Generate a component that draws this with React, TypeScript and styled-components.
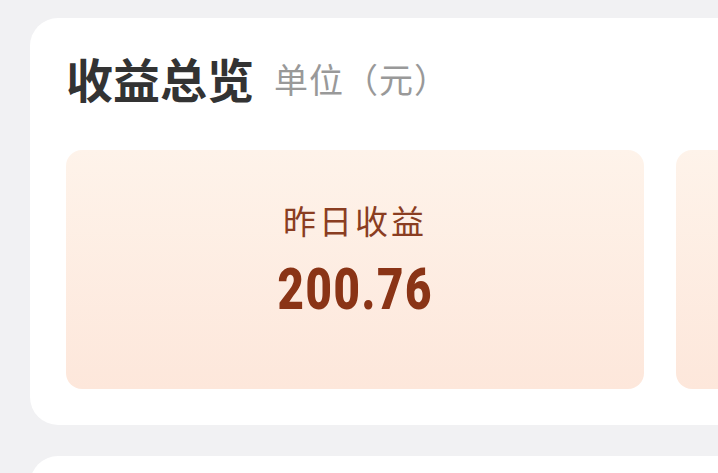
import React from "react";
import styled, { createGlobalStyle } from "styled-components";

const Global = createGlobalStyle`
  html, body {
    margin: 0;
    padding: 0;
    background: #f1f1f3;
    overflow: hidden;
  }
  body {
    font-family: "Noto Sans CJK SC", "Noto Sans", sans-serif;
  }
`;

const Page = styled.div`
  width: 1400px;
  padding: 18px 0 0 30px;
  display: flex;
  flex-direction: column;
  gap: 31px;
`;

const Panel = styled.section<{ $minHeight?: number }>`
  background: #ffffff;
  border-radius: 28px;
  padding: 32px 36px 36px;
  width: 1260px;
  box-sizing: border-box;
  min-height: ${(p) => (p.$minHeight ? `${p.$minHeight}px` : "auto")};
`;

const Header = styled.div`
  display: flex;
  align-items: center;
  height: 56px;
  margin-bottom: 44px;
`;

const Title = styled.h2`
  margin: 0;
  font-size: 47px;
  line-height: 56px;
  font-weight: 700;
  color: #333333;
`;

const Unit = styled.span`
  margin-left: 20px;
  font-size: 34px;
  line-height: 40px;
  letter-spacing: 1px;
  color: #999999;
  font-weight: 400;
  padding-top: 2px;
`;

const CardRow = styled.div`
  display: flex;
  gap: 32px;
`;

const StatCard = styled.div`
  width: 578px;
  height: 239px;
  flex: none;
  box-sizing: border-box;
  border-radius: 16px;
  background: linear-gradient(180deg, #fef3ea 0%, #fde7db 100%);
  padding-top: 48px;
  display: flex;
  flex-direction: column;
  align-items: center;
`;

const StatLabel = styled.div`
  font-size: 33px;
  line-height: 44px;
  letter-spacing: 3px;
  color: #8a3d21;
  font-weight: 400;
`;

const StatValue = styled.div`
  margin-top: 18px;
  font-family: Roboto, "Liberation Sans", sans-serif;
  font-size: 57px;
  line-height: 60px;
  font-weight: 900;
  letter-spacing: 2px;
  color: #8a3416;
  transform: scaleX(0.8);
  transform-origin: center;
`;

const stats = [
  { label: "昨日收益", value: "200.76" },
  { label: "本月收益", value: "3086.50" },
];

export default function App() {
  return (
    <>
      <Global />
      <Page>
        <Panel>
          <Header>
            <Title>收益总览</Title>
            <Unit>单位（元）</Unit>
          </Header>
          <CardRow>
            {stats.map((s) => (
              <StatCard key={s.label}>
                <StatLabel>{s.label}</StatLabel>
                <StatValue>{s.value}</StatValue>
              </StatCard>
            ))}
          </CardRow>
        </Panel>
        <Panel $minHeight={300} />
      </Page>
    </>
  );
}
